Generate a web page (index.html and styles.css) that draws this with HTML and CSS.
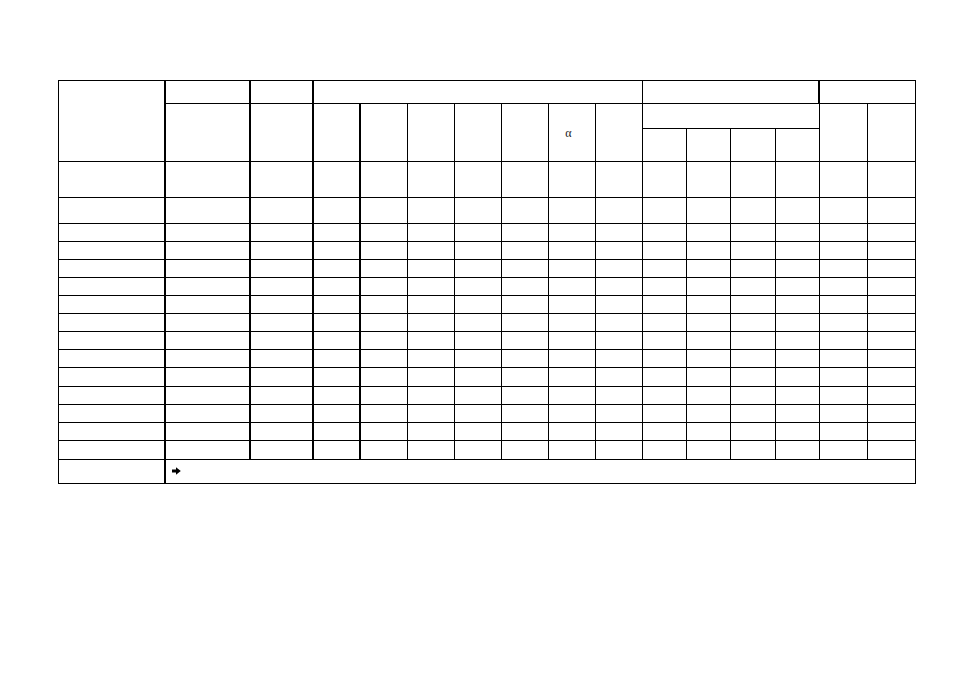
FILE: index.html
```html
<!DOCTYPE html>
<html lang="en">
<head>
<meta charset="utf-8">
<title>Table</title>
<link rel="stylesheet" href="styles.css">
</head>
<body>
<div class="page">
  <div class="sheet">
    <div class="row head1">
      <div class="c h-side"></div>
      <div class="c"></div>
      <div class="c"></div>
      <div class="c span7"></div>
      <div class="c span4 thick-r"></div>
      <div class="c span2"></div>
    </div>
    <div class="row head2">
      <div class="c tall"></div>
      <div class="c tall"></div>
      <div class="c tall"></div>
      <div class="c tall"></div>
      <div class="c tall"></div>
      <div class="c tall"></div>
      <div class="c tall"></div>
      <div class="c tall sym">&alpha;</div>
      <div class="c tall"></div>
      <div class="c span4"></div>
      <div class="c tall"></div>
      <div class="c tall"></div>
    </div>
    <div class="row head3">
      <div class="c"></div><div class="c"></div><div class="c"></div><div class="c"></div>
    </div>

    <div class="row body"><div class="c"></div><div class="c"></div><div class="c"></div><div class="c"></div><div class="c"></div><div class="c"></div><div class="c"></div><div class="c"></div><div class="c"></div><div class="c"></div><div class="c"></div><div class="c"></div><div class="c"></div><div class="c"></div><div class="c"></div><div class="c"></div></div>
    <div class="row body"><div class="c"></div><div class="c"></div><div class="c"></div><div class="c"></div><div class="c"></div><div class="c"></div><div class="c"></div><div class="c"></div><div class="c"></div><div class="c"></div><div class="c"></div><div class="c"></div><div class="c"></div><div class="c"></div><div class="c"></div><div class="c"></div></div>
    <div class="row body"><div class="c"></div><div class="c"></div><div class="c"></div><div class="c"></div><div class="c"></div><div class="c"></div><div class="c"></div><div class="c"></div><div class="c"></div><div class="c"></div><div class="c"></div><div class="c"></div><div class="c"></div><div class="c"></div><div class="c"></div><div class="c"></div></div>
    <div class="row body"><div class="c"></div><div class="c"></div><div class="c"></div><div class="c"></div><div class="c"></div><div class="c"></div><div class="c"></div><div class="c"></div><div class="c"></div><div class="c"></div><div class="c"></div><div class="c"></div><div class="c"></div><div class="c"></div><div class="c"></div><div class="c"></div></div>
    <div class="row body"><div class="c"></div><div class="c"></div><div class="c"></div><div class="c"></div><div class="c"></div><div class="c"></div><div class="c"></div><div class="c"></div><div class="c"></div><div class="c"></div><div class="c"></div><div class="c"></div><div class="c"></div><div class="c"></div><div class="c"></div><div class="c"></div></div>
    <div class="row body"><div class="c"></div><div class="c"></div><div class="c"></div><div class="c"></div><div class="c"></div><div class="c"></div><div class="c"></div><div class="c"></div><div class="c"></div><div class="c"></div><div class="c"></div><div class="c"></div><div class="c"></div><div class="c"></div><div class="c"></div><div class="c"></div></div>
    <div class="row body"><div class="c"></div><div class="c"></div><div class="c"></div><div class="c"></div><div class="c"></div><div class="c"></div><div class="c"></div><div class="c"></div><div class="c"></div><div class="c"></div><div class="c"></div><div class="c"></div><div class="c"></div><div class="c"></div><div class="c"></div><div class="c"></div></div>
    <div class="row body"><div class="c"></div><div class="c"></div><div class="c"></div><div class="c"></div><div class="c"></div><div class="c"></div><div class="c"></div><div class="c"></div><div class="c"></div><div class="c"></div><div class="c"></div><div class="c"></div><div class="c"></div><div class="c"></div><div class="c"></div><div class="c"></div></div>
    <div class="row body"><div class="c"></div><div class="c"></div><div class="c"></div><div class="c"></div><div class="c"></div><div class="c"></div><div class="c"></div><div class="c"></div><div class="c"></div><div class="c"></div><div class="c"></div><div class="c"></div><div class="c"></div><div class="c"></div><div class="c"></div><div class="c"></div></div>
    <div class="row body"><div class="c"></div><div class="c"></div><div class="c"></div><div class="c"></div><div class="c"></div><div class="c"></div><div class="c"></div><div class="c"></div><div class="c"></div><div class="c"></div><div class="c"></div><div class="c"></div><div class="c"></div><div class="c"></div><div class="c"></div><div class="c"></div></div>
    <div class="row body"><div class="c"></div><div class="c"></div><div class="c"></div><div class="c"></div><div class="c"></div><div class="c"></div><div class="c"></div><div class="c"></div><div class="c"></div><div class="c"></div><div class="c"></div><div class="c"></div><div class="c"></div><div class="c"></div><div class="c"></div><div class="c"></div></div>
    <div class="row body"><div class="c"></div><div class="c"></div><div class="c"></div><div class="c"></div><div class="c"></div><div class="c"></div><div class="c"></div><div class="c"></div><div class="c"></div><div class="c"></div><div class="c"></div><div class="c"></div><div class="c"></div><div class="c"></div><div class="c"></div><div class="c"></div></div>
    <div class="row body"><div class="c"></div><div class="c"></div><div class="c"></div><div class="c"></div><div class="c"></div><div class="c"></div><div class="c"></div><div class="c"></div><div class="c"></div><div class="c"></div><div class="c"></div><div class="c"></div><div class="c"></div><div class="c"></div><div class="c"></div><div class="c"></div></div>
    <div class="row body"><div class="c"></div><div class="c"></div><div class="c"></div><div class="c"></div><div class="c"></div><div class="c"></div><div class="c"></div><div class="c"></div><div class="c"></div><div class="c"></div><div class="c"></div><div class="c"></div><div class="c"></div><div class="c"></div><div class="c"></div><div class="c"></div></div>
    <div class="row body"><div class="c"></div><div class="c"></div><div class="c"></div><div class="c"></div><div class="c"></div><div class="c"></div><div class="c"></div><div class="c"></div><div class="c"></div><div class="c"></div><div class="c"></div><div class="c"></div><div class="c"></div><div class="c"></div><div class="c"></div><div class="c"></div></div>

    <div class="row foot">
      <div class="c"></div>
      <div class="c span15 note">
        <svg class="arrow" width="9" height="8" viewBox="0 0 9 8" aria-hidden="true">
          <path d="M0 2.5h4V0.2L8.8 4 4 7.8V5.5H0z" fill="#000"/>
        </svg>
      </div>
    </div>
  </div>
</div>
</body>
</html>
```

FILE: styles.css
```css
html, body {
  margin: 0;
  padding: 0;
  background: #fff;
}

body {
  font-family: "Liberation Serif", "Times New Roman", serif;
  color: #000;
}

.page {
  padding: 80px 0 0 58px;
}

.sheet {
  display: grid;
  width: 858px;
  box-sizing: border-box;
  border-top: 1px solid #000;
  border-left: 1px solid #000;
  grid-template-columns: 107px 85px 63px repeat(7, 47px) 44px 44px 45px 44px 48px 48px;
  grid-template-rows: 23px 25px 33px 36px 26px repeat(8, 18px) 19px repeat(3, 18px) 19px 24px;
}

.row {
  display: contents;
}

.c {
  box-sizing: border-box;
  border-right: 1px solid #000;
  border-bottom: 1px solid #000;
  min-width: 0;
}

/* heavier rules after the first four columns */
.body > .c:nth-child(-n+4),
.head1 > .c:nth-child(-n+3),
.head2 > .c:nth-child(-n+3),
.foot > .c:nth-child(1) {
  border-right-width: 2px;
}

.h-side { grid-row: span 3; }
.tall { grid-row: span 2; }
.span2 { grid-column: span 2; }
.span4 { grid-column: span 4; }
.span7 { grid-column: span 7; }
.span15 { grid-column: span 15; }

.thick-r { border-right-width: 2px; }

.sym {
  display: flex;
  align-items: center;
  justify-content: center;
  font-size: 12px;
  color: #222;
  padding: 2px 7px 0 0;
}

.note {
  display: flex;
  align-items: center;
  padding-left: 6px;
  padding-bottom: 1px;
}

.arrow {
  display: block;
}
```
